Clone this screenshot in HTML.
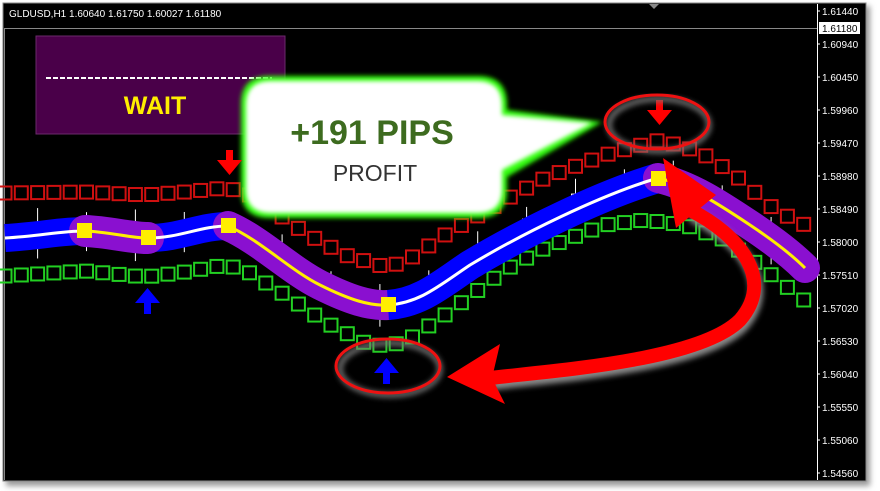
<!DOCTYPE html>
<html><head><meta charset="utf-8"><style>
body{margin:0;background:#fff;width:880px;height:491px;overflow:hidden;font-family:"Liberation Sans",sans-serif}
svg{display:block}
</style></head><body>
<svg id="s" width="880" height="491" xmlns="http://www.w3.org/2000/svg">
<defs>
<filter id="glow" x="-20%" y="-20%" width="140%" height="140%"><feGaussianBlur stdDeviation="2.5"/></filter>
<filter id="sh" x="-10%" y="-10%" width="130%" height="130%"><feGaussianBlur stdDeviation="3"/></filter>
<filter id="in" x="-10%" y="-10%" width="130%" height="130%"><feGaussianBlur stdDeviation="2"/></filter>
</defs>
<rect x="6" y="6" width="864" height="480" fill="#999" filter="url(#sh)"/>
<rect x="3" y="3" width="863" height="478" fill="#000" stroke="#888" stroke-width="1"/>
<line x1="4" y1="28.5" x2="817" y2="28.5" stroke="#888"/>
<line x1="4.5" y1="28" x2="4.5" y2="480" stroke="#888"/>
<line x1="817.5" y1="4" x2="817.5" y2="480" stroke="#fff"/>
<polygon points="649,4 659,4 654,9" fill="#888"/>
<text x="9" y="17" fill="#fff" font-size="10">GLDUSD,H1  1.60640 1.61750 1.60027 1.61180</text>
<g id="axis" fill="#fff" font-size="10"></g>
<rect x="819" y="22" width="41" height="12" fill="#fff"/>
<text x="822" y="32" fill="#000" font-size="10">1.61180</text>
<g id="candles"></g>
<g id="red" fill="none" stroke="#d01010" stroke-width="2"></g>
<g id="grn" fill="none" stroke="#22d022" stroke-width="2"></g>
<path d="M5,238 C40,236 60,231 85,231 C110,232 130,238 148,238 C180,238 200,226 228,226" stroke="#0000ff" stroke-width="28" fill="none"/>
<path d="M85,231 C110,232 130,238 148,238" stroke="#8a10d0" stroke-width="32" stroke-linecap="round" fill="none"/>
<path d="M228,226 C260,240 290,270 320,285 C350,300 370,306 388,305" stroke="#8a10d0" stroke-width="30" stroke-linecap="round" fill="none"/>
<path d="M388,305 C420,303 440,285 470,265 C520,235 600,195 658,178" stroke="#0000ff" stroke-width="30" fill="none"/>
<path d="M658,178 C690,185 720,205 750,225 C780,245 795,258 805,268" stroke="#8a10d0" stroke-width="30" stroke-linecap="round" fill="none"/>
<path d="M5,238 C40,236 60,231 85,231 M148,238 C180,238 200,226 228,226 M388,305 C420,303 440,285 470,265 C520,235 600,195 658,178" stroke="#fff" stroke-width="3" fill="none"/>
<path d="M85,231 C110,232 130,238 148,238 M228,226 C260,240 290,270 320,285 C350,300 370,306 388,305 M658,178 C690,185 720,205 750,225 C780,245 795,258 805,268" stroke="#ffee00" stroke-width="3" fill="none"/>
<g fill="#ffee00"><rect x="77" y="223" width="15" height="15"/><rect x="141" y="230" width="15" height="15"/><rect x="221" y="218" width="15" height="15"/><rect x="381" y="297" width="15" height="15"/><rect x="651" y="171" width="15" height="15"/></g>
<rect x="36" y="36" width="249" height="98" fill="#4a0049" stroke="#6a2a6a"/>
<line x1="46" y1="78" x2="272" y2="78" stroke="#fff" stroke-width="2" stroke-dasharray="5,2"/>
<text x="155" y="114" fill="#ffee00" font-size="25" font-weight="bold" text-anchor="middle">WAIT</text>
<g>
<path d="M270,76 H478 Q507,76 507,105 V110 L602,122 L507,177 V190 Q507,218 478,218 H270 Q241,218 241,190 V104 Q241,76 270,76 Z" fill="#33ff11" filter="url(#glow)"/>
<path d="M271,81 H477 Q502,81 502,106 V115 L592,123 L502,170 V189 Q502,213 477,213 H271 Q246,213 246,189 V105 Q246,81 271,81 Z" fill="#fff" filter="url(#in)"/>
<path d="M276,88 H472 Q495,88 495,110 V185 Q495,206 472,206 H276 Q253,206 253,185 V110 Q253,88 276,88 Z" fill="#fff"/>
</g>
<text x="372" y="144" fill="#3d6b1f" font-size="34" font-weight="bold" text-anchor="middle">+191 PIPS</text>
<text x="375" y="181" fill="#333" font-size="23" text-anchor="middle">PROFIT</text>
<g fill="#ff0000"><path d="M226,150h7v10h9l-12.5,15l-12.5,-15h9z"/><path d="M656,100h7v10h9l-12.5,15l-12.5,-15h9z"/></g>
<g fill="#0000ff"><path d="M144,314h7v-11h9l-12.5,-15l-12.5,15h9z"/><path d="M383,384h7v-11h9l-12.5,-15l-12.5,15h9z"/></g>
<ellipse cx="659" cy="125" rx="50" ry="26" fill="none" stroke="#777" stroke-width="5" filter="url(#sh)"/>
<ellipse cx="657" cy="122" rx="52" ry="27" fill="none" stroke="#ee1111" stroke-width="3"/>
<ellipse cx="390" cy="369" rx="50" ry="26" fill="none" stroke="#777" stroke-width="5" filter="url(#sh)"/>
<ellipse cx="388" cy="366" rx="52" ry="27" fill="none" stroke="#ee1111" stroke-width="3"/>
<path d="M690,210 C740,235 775,280 740,320 C700,360 560,370 490,378" fill="none" stroke="#888" stroke-width="14" filter="url(#sh)" transform="translate(2,5)"/>
<path d="M690,210 C740,235 775,280 740,320 C700,360 560,370 490,378" fill="none" stroke="#ff0000" stroke-width="14"/>
<polygon points="663,158 716,195 676,228" fill="#ff0000"/>
<polygon points="447,377 500,344 492,378 505,404" fill="#ff0000"/>
</svg>
<script>
var NS="http://www.w3.org/2000/svg";
function el(p,t,a){var e=document.createElementNS(NS,t);for(var k in a)e.setAttribute(k,a[k]);document.getElementById(p).appendChild(e);return e}
var ax=[["1.61440",15],["1.60940",48],["1.60450",81],["1.59960",114],["1.59470",147],["1.58980",180],["1.58490",213],["1.58000",246],["1.57510",279],["1.57020",312],["1.56530",345],["1.56040",378],["1.55550",411],["1.55060",444],["1.54560",477]];
ax.forEach(function(a){var t=el("axis","text",{x:822,y:a[1]});t.textContent=a[0];el("axis","line",{x1:817,x2:820,y1:a[1]-4,y2:a[1]-4,stroke:"#fff"})});
function interp(pts,x){for(var i=0;i<pts.length-1;i++){if(x>=pts[i][0]&&x<=pts[i+1][0]){var f=(x-pts[i][0])/(pts[i+1][0]-pts[i][0]);return pts[i][1]+f*(pts[i+1][1]-pts[i][1])}}return pts[pts.length-1][1]}
var up=[[5,193],[85,192],[145,195],[185,192],[225,188],[245,192],[265,205],[305,233],[345,255],[385,267],[405,262],[445,235],[505,200],[545,178],[605,155],[660,140],[700,152],[735,175],[775,210],[805,225]];
var lo=[[5,276],[85,271],[145,277],[185,272],[225,265],[245,270],[285,295],[325,322],[365,343],[385,346],[405,342],[445,315],[505,270],[545,248],[605,225],[645,220],[685,225],[725,240],[765,270],[805,301]];
var i=0;
for(var x=5;x<=805;x+=16.3){i++;var yu=interp(up,x),yl=interp(lo,x);
el("red","rect",{x:x-6.5,y:yu-6.5,width:13,height:13});
el("grn","rect",{x:x-6.5,y:yl-6.5,width:13,height:13});
if(i%3==0){var mid=(yu+yl)/2, h=6+((x*7)%12);
el("candles","line",{x1:x,x2:x,y1:mid-h-8,y2:mid+h+8,stroke:"#fff"});
el("candles","rect",{x:x-4,y:mid-h/2,width:8,height:h,fill:(i%2?"#208020":"#800000"),stroke:"#fff"});}}
</script>
</body></html>
